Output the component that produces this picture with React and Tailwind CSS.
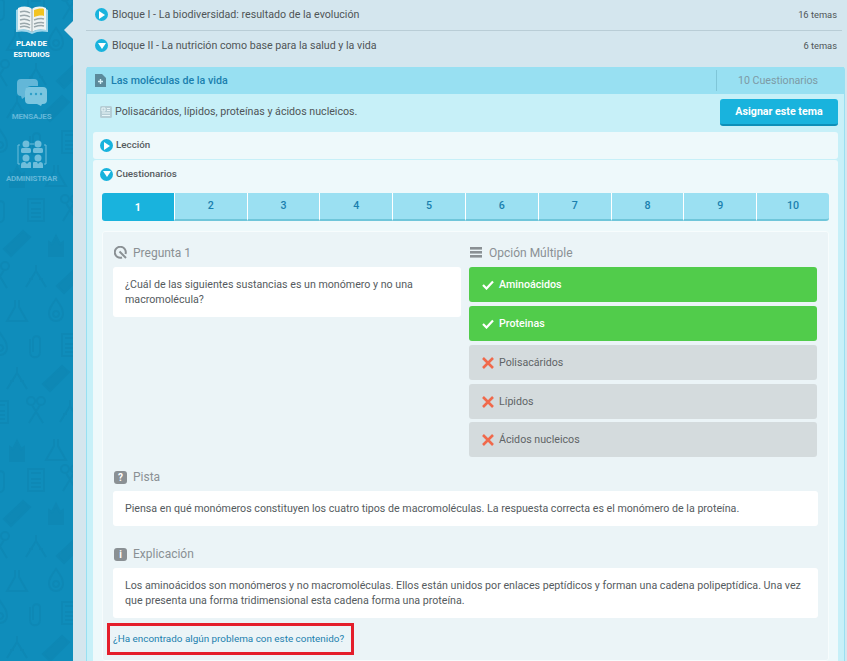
const tabs = ["1", "2", "3", "4", "5", "6", "7", "8", "9", "10"];

const options = [
  { label: "Aminoácidos", ok: true, h: "mb-1" },
  { label: "Proteinas", ok: true, h: "mb-1" },
  { label: "Polisacáridos", ok: false, h: "mb-1" },
  { label: "Lípidos", ok: false, h: "mb-[3px]" },
  { label: "Ácidos nucleicos", ok: false, h: "" },
];

// wallpaper of the sidebar, each glyph is centered on 0,0
const glyphs = {
  calc: <path d="M-8-11h16v22H-8zM-5-7H5M-5-1H5M-5 3H5M-5 7H5" />,
  clip: <path d="M-3 7V-5c0-5 7-5 7 0V7c0 7-10 7-10 0V-6" />,
  scissors: <path d="M-9-11a4 4 0 1 0 8 0a4 4 0 1 0-8 0M1-11a4 4 0 1 0 8 0a4 4 0 1 0-8 0M-4-7L7 11M4-7L-7 11" />,
  ruler: <path d="M-13 6L6-12l7 6L-6 13z" fill="#0e88b5" />,
  building: <path d="M-7 11V-3l3 2 4-8 4 8 3-2v14z" fill="#0e88b5" />,
  compass: <path d="M0-12v6M0-6L-10 10M0-6L10 10M-7 2h4M7 2H3" />,
  flask: <path d="M-2-11v7L-10 10h20L2-4v-7" />,
  drop: <path d="M0-12C5-5 7-2 7 3A7 7 0 0 1-7 3C-7-2-5-5 0-12zM0 0a3 3 0 1 0 .1 0" />,
};

const pattern = [
  [0, 8, "clip"], [36, 8, "calc"], [70, 8, "scissors"],
  [17, 40, "flask"], [56, 40, "drop"],
  [0, 75, "scissors"], [36, 75, "compass"], [70, 75, "ruler"],
  [17, 108, "compass"], [56, 108, "ruler"],
  [0, 142, "drop"], [36, 142, "clip"], [70, 142, "calc"],
  [17, 176, "building"], [56, 176, "flask"],
  [0, 210, "clip"], [36, 210, "calc"], [70, 210, "scissors"],
  [17, 243, "ruler"], [56, 245, "building"],
  [0, 277, "scissors"], [36, 277, "compass"], [70, 280, "ruler"],
  [17, 311, "flask"], [56, 311, "drop"],
  [0, 345, "drop"], [36, 345, "clip"], [70, 345, "calc"],
  [17, 379, "compass"], [56, 378, "ruler"],
  [0, 412, "calc"], [36, 412, "scissors"], [70, 412, "compass"],
  [17, 450, "building"], [56, 450, "flask"],
  [0, 480, "clip"], [36, 480, "calc"], [70, 480, "scissors"],
  [17, 513, "ruler"], [56, 513, "building"],
  [0, 547, "scissors"], [36, 547, "compass"], [70, 550, "ruler"],
  [17, 581, "flask"], [56, 581, "drop"],
  [0, 613, "drop"], [36, 613, "clip"], [70, 613, "calc"],
  [17, 648, "compass"], [56, 648, "ruler"],
];

const SidebarPattern = () => (
  <svg className="absolute left-0 top-0" width="73" height="661" fill="none" stroke="#0e88b5" strokeWidth="2">
    {pattern.map(([x, y, name], i) => (
      <g key={i} transform={`translate(${x} ${y})`}>{glyphs[name]}</g>
    ))}
  </svg>
);

const BookIcon = () => (
  <svg width="32" height="28" viewBox="0 0 32 28">
    <path d="M0 4l2-1v21c5-1 10-1 14 2 4-3 9-3 14-2V3l2 1v22c-5-1-11-1-16 2-5-3-11-3-16-2z" fill="#9fd6ea" />
    <path d="M2 2c5-2 10-2 14 1 4-3 9-3 14-1v22c-5-1-10-1-14 2-4-3-9-3-14-2z" fill="#eef3f3" />
    <path d="M18 4c3-1 7-2 10-1v7c-3-1-7 0-10 1z" fill="#f2c322" />
    <path d="M16 3v23" stroke="#9aa7ab" strokeWidth="1" />
    <path d="M4 6c3-1 7-1 10 1M4 10c3-1 7-1 10 1M4 14c3-1 7-1 10 1M4 18c3-1 7-1 10 1M4 21c3-1 7-1 10 1M18 14c3-1 7-2 10-1M18 18c3-1 7-2 10-1M18 21c3-1 7-2 10-1" stroke="#9aa7ab" strokeWidth="1.5" fill="none" />
  </svg>
);

const MessagesIcon = () => (
  <svg width="30" height="27" viewBox="0 0 30 27">
    <path d="M4 0h13a4 4 0 0 1 4 4v3h-7a6 6 0 0 0-6 6v5l-3 2-1-3H4a4 4 0 0 1-4-4V4a4 4 0 0 1 4-4z" fill="#63b7d8" />
    <path d="M12 8h14a4 4 0 0 1 4 4v9a4 4 0 0 1-4 4h-1l-1 2-4-2h-8a4 4 0 0 1-4-4v-9a4 4 0 0 1 4-4z" fill="#7cc6e0" />
    <circle cx="14" cy="15" r="1.2" fill="#2f9fc8" />
    <circle cx="19" cy="15" r="1.2" fill="#2f9fc8" />
    <circle cx="24" cy="15" r="1.2" fill="#2f9fc8" />
  </svg>
);

const AdminIcon = () => (
  <svg width="30" height="29" viewBox="0 0 30 29" fill="#6fbedb">
    <circle cx="9" cy="4" r="3.5" />
    <circle cx="21" cy="4" r="3.5" />
    <rect x="4" y="8" width="10" height="5" rx="1.5" />
    <rect x="16" y="8" width="10" height="5" rx="1.5" />
    <circle cx="9" cy="18" r="3.5" />
    <circle cx="21" cy="18" r="3.5" />
    <path d="M4 28v-3a3 3 0 0 1 3-3h1l2 2 2-2h1a1 1 0 0 1 1 1v5zM16 28v-5a1 1 0 0 1 1-1h3l1 2 2-2a3 3 0 0 1 3 3v3z" />
    <path d="M3 5H1v19h2M27 5h2v19h-2M13 4h4" stroke="#6fbedb" strokeWidth="1" fill="none" />
  </svg>
);

const Bullet = ({ open }) => (
  <span className="flex h-[13px] w-[13px] shrink-0 items-center justify-center rounded-full bg-[#19b3dd]">
    {open ? (
      <svg width="8" height="6" viewBox="0 0 8 6"><path d="M0 0h8L4 6z" fill="#fff" /></svg>
    ) : (
      <svg width="6" height="8" viewBox="0 0 6 8"><path d="M0 0l6 4-6 4z" fill="#fff" /></svg>
    )}
  </span>
);

const SquareIcon = ({ children }) => (
  <span className="h-[13px] w-[13px] rounded-[3px] bg-[#8a9094] text-center text-[10px] font-bold leading-[13px] text-white">
    {children}
  </span>
);

const BlockRow = ({ open, title, count, border }) => (
  <div className={`ml-[13px] mr-[3px] flex h-[31px] items-center ${border ? "border-b border-[#b9cdd6] pb-px" : "pb-[2px]"}`}>
    <span className="ml-[9px] mr-[4px]"><Bullet open={open} /></span>
    <span className="text-[10.67px] text-[#4f5557]">{title}</span>
    <span className="ml-auto mr-[5px] text-[9.33px] text-[#4f5557]">{count}</span>
  </div>
);

export default function App() {
  return (
    <div className="flex h-[661px] w-[847px] overflow-hidden bg-[#d4e6ee] font-['Roboto',sans-serif]">
      <aside className="relative w-[73px] shrink-0 bg-[#0f8dbb]">
        <SidebarPattern />
        <div className="relative flex w-[63px] flex-col items-center">
          <div className="mt-[6px]"><BookIcon /></div>
          <div className="mt-[4px] text-center text-[8px] font-bold leading-[11px] tracking-[-0.2px] text-white">PLAN DE<br />ESTUDIOS</div>
          <div className="mt-[19px]"><MessagesIcon /></div>
          <div className="mt-[5px] text-[8px] font-bold leading-[11px] tracking-[-0.2px] text-[#63b7d8]">MENSAJES</div>
          <div className="mt-[18px]"><AdminIcon /></div>
          <div className="mt-[4px] text-[8px] font-bold leading-[11px] tracking-[-0.2px] text-[#63b7d8]">ADMINISTRAR</div>
        </div>
        <span className="absolute left-[64px] top-[21px] h-0 w-0 border-y-[9px] border-r-[9px] border-y-transparent border-r-[#d4e6ee]" />
      </aside>

      <main className="min-w-0 flex-1 pr-[2px]">
        <BlockRow title="Bloque I - La biodiversidad: resultado de la evolución" count="16 temas" border />
        <BlockRow open title="Bloque II - La nutrición como base para la salud y la vida" count="6 temas" />

        <section className="ml-[13px] mt-[5px] rounded-t-[3px] border-x border-[#98e0f2] bg-[#c7f0f8]">
          <header className="flex h-[27px] items-center bg-[#98e0f2]">
            <svg className="ml-[8px] mr-[5px]" width="11" height="13" viewBox="0 0 11 13">
              <path d="M0 0h7l4 4v9H0z" fill="#5b8a9b" />
              <path d="M5.5 5v5M3 7.5h5" stroke="#d5f1f8" strokeWidth="1.4" />
            </svg>
            <span className="text-[10.67px] font-medium text-[#1a7fae]">Las moléculas de la vida</span>
            <span className="ml-auto mr-[5px] flex h-[21px] w-[123px] items-center justify-center border-l border-[#7fc6d8] text-[10.67px] text-[#7d9aa5]">10 Cuestionarios</span>
          </header>

          <div className="flex h-[38px] items-center pb-[1px] pl-[13px] pr-[6px]">
            <svg className="mb-[2px] mr-[3px]" width="12" height="12" viewBox="0 0 12 12">
              <rect width="12" height="12" rx="1.5" fill="#b5cdd5" />
              <path d="M2 2h3v3H2zM7 2.5h3M7 4.5h3M2 7h8M2 9.5h8" stroke="#e8f6f9" strokeWidth="1" fill="none" />
            </svg>
            <span className="mb-[2px] text-[10.67px] text-[#4f5557]">Polisacáridos, lípidos, proteínas y ácidos nucleicos.</span>
            <button className="ml-auto h-[27px] w-[118px] rounded-[3px] border-b-2 border-[#0d8fb8] bg-[#19b3dd] text-[10.67px] font-bold text-white">Asignar este tema</button>
          </div>

          <div className="mx-[6px] flex h-[27px] items-center gap-[3px] rounded-[3px] bg-[#eef9fb] pl-[7px]">
            <Bullet />
            <span className="text-[9.8px] font-medium text-[#555b5e]">Lección</span>
          </div>

          <div className="mx-[6px] mt-px rounded-t-[3px] bg-[#eef9fb] px-[9px] pb-[4px]">
            <div className="-ml-[2px] flex h-[28px] items-center gap-[3px]">
              <Bullet open />
              <span className="text-[9.8px] font-medium text-[#555b5e]">Cuestionarios</span>
            </div>

            <div className="mt-[5px] flex h-[28px]">
              {tabs.map((t, i) => (
                <div
                  key={t}
                  className={
                    i === 0
                      ? "flex flex-[1_1_0] items-center justify-center rounded-l-[3px] bg-[#19b3dd] pt-[2px] text-[10.67px] font-bold text-white"
                      : `flex flex-[1_1_0] items-center justify-center border-b-2 border-l border-b-[#6fc6da] border-l-white bg-[#9be0f2] text-[10.67px] font-medium text-[#1a7fae] ${i === 9 ? "rounded-r-[3px]" : ""}`
                  }
                >
                  {t}
                </div>
              ))}
            </div>

            <div className="mt-[10px] rounded-[3px] border border-[#f7fcfd] bg-[#ebf4f7] px-[10px] pb-[5px]">
              <div className="flex gap-2">
                <div className="w-[348px]">
                  <div className="flex h-[35px] items-center gap-[6px] pl-px pt-[6px]">
                    <svg width="13" height="13" viewBox="0 0 13 13" fill="none" stroke="#8a9094" strokeWidth="2">
                      <path d="M11.5 8A5.5 5.5 0 1 0 8 11.5" />
                      <path d="M5.5 5.5L12 12" />
                    </svg>
                    <span className="text-[12px] text-[#8a9094]">Pregunta 1</span>
                  </div>
                  <div className="h-[50px] rounded-[3px] bg-white px-[12px] pt-[10px] text-[10.67px] leading-[15px] text-[#555b5e]">
                    ¿Cuál de las siguientes sustancias es un monómero y no una macromolécula?
                  </div>
                </div>
                <div className="w-[348px]">
                  <div className="flex h-[35px] items-center gap-[6px] pl-px pt-[6px]">
                    <svg width="13" height="11" viewBox="0 0 13 11" fill="#8a9094">
                      <rect width="12" height="2.6" /><rect y="4" width="12" height="2.6" /><rect y="8" width="12" height="2.6" />
                    </svg>
                    <span className="text-[12px] text-[#8a9094]">Opción Múltiple</span>
                  </div>
                  {options.map((o) => (
                    <div
                      key={o.label}
                      className={`flex h-[35px] items-center rounded-[3px] pl-[13px] text-[10.67px] ${o.h} ${o.ok ? "bg-[#51cc4b] font-medium text-white" : "bg-[#d4dbdd] text-[#5f6466]"}`}
                    >
                      {o.ok ? (
                        <svg width="12" height="10" viewBox="0 0 12 10" fill="none" stroke="#fff" strokeWidth="2.2"><path d="M1 5l3.5 3.5L11 1.5" /></svg>
                      ) : (
                        <svg width="12" height="12" viewBox="0 0 12 12" fill="none" stroke="#f0694b" strokeWidth="2.6"><path d="M1 1l10 10M11 1L1 11" /></svg>
                      )}
                      <span className="ml-[5px] pt-px">{o.label}</span>
                    </div>
                  ))}
                </div>
              </div>

              <div className="flex h-[34px] items-center gap-[6px] pl-px pt-[6px]">
                <SquareIcon>?</SquareIcon>
                <span className="text-[12px] text-[#8a9094]">Pista</span>
              </div>
              <div className="flex h-[35px] items-center rounded-[3px] bg-white px-[12px] text-[10.67px] text-[#555b5e]">
                Piensa en qué monómeros constituyen los cuatro tipos de macromoléculas. La respuesta correcta es el monómero de la proteína.
              </div>

              <div className="mt-[8px] flex h-[34px] items-center gap-[6px] pl-px pt-[6px]">
                <SquareIcon>i</SquareIcon>
                <span className="text-[12px] text-[#8a9094]">Explicación</span>
              </div>
              <div className="h-[50px] rounded-[3px] bg-white px-[12px] pt-[10px] text-[10.67px] leading-[15px] text-[#555b5e]">
                Los aminoácidos son monómeros y no macromoléculas. Ellos están unidos por enlaces peptídicos y forman una cadena polipeptídica. Una vez que presenta una forma tridimensional esta cadena forma una proteína.
              </div>

              <div className="-ml-[6px] mt-[5px] flex h-[32px] w-[247px] items-center border-[3px] border-[#e41e2b] pl-[3px] text-[9.9px] text-[#1a7fae]">
                ¿Ha encontrado algún problema con este contenido?
              </div>
            </div>
          </div>
        </section>
      </main>
    </div>
  );
}
